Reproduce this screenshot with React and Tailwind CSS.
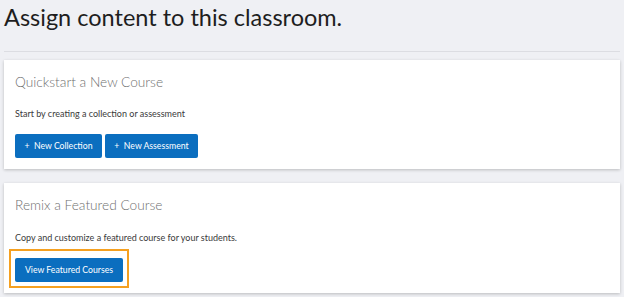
export default function App() {
  return (
    <div
      className="w-[624px] h-[297px] bg-[#eff0f4] px-[4px] overflow-hidden"
      style={{ fontFamily: "Lato, 'Open Sans', sans-serif" }}
    >
      <h1 className="pt-[3px] text-[23.5px] leading-[29px] text-[#1e1e1e]">
        Assign content to this classroom.
      </h1>
      <div className="mt-[19px] h-px w-[616px] bg-[#dcdde2]" />

      <div className="mt-[8px] w-[616px] h-[109px] bg-white shadow-[0_1px_3px_rgba(0,0,0,0.22)] px-[11px] pt-[13px]">
        <h2 className="text-[13.7px] leading-[18px] font-light text-[#707070]">
          Quickstart a New Course
        </h2>
        <p className="mt-[16px] text-[9px] leading-[13px] text-[#3a3a3a]">
          Start by creating a collection or assessment
        </p>
        <div className="mt-[14px] flex gap-[3px]">
          <button className="h-[24px] w-[87px] rounded-[2px] bg-[#0b6ebf] text-[8.7px] text-white">
            +&nbsp; New Collection
          </button>
          <button className="h-[24px] w-[93px] rounded-[2px] bg-[#0b6ebf] text-[8.7px] text-white">
            +&nbsp; New Assessment
          </button>
        </div>
      </div>

      <div className="mt-[14px] w-[616px] h-[110px] bg-white shadow-[0_1px_3px_rgba(0,0,0,0.22)] px-[11px] pt-[13px]">
        <h2 className="text-[13.7px] leading-[18px] font-light text-[#707070]">
          Remix a Featured Course
        </h2>
        <p className="mt-[17px] text-[9px] leading-[13px] text-[#3a3a3a]">
          Copy and customize a featured course for your students.
        </p>
        <div className="mt-[5px] -ml-[6px] inline-block border-2 border-[#f5a020] px-[4px] pt-[7px] pb-[4px]">
          <button className="block h-[24px] w-[108px] rounded-[2px] bg-[#0b6ebf] text-[8.7px] text-white">
            View Featured Courses
          </button>
        </div>
      </div>
    </div>
  );
}
